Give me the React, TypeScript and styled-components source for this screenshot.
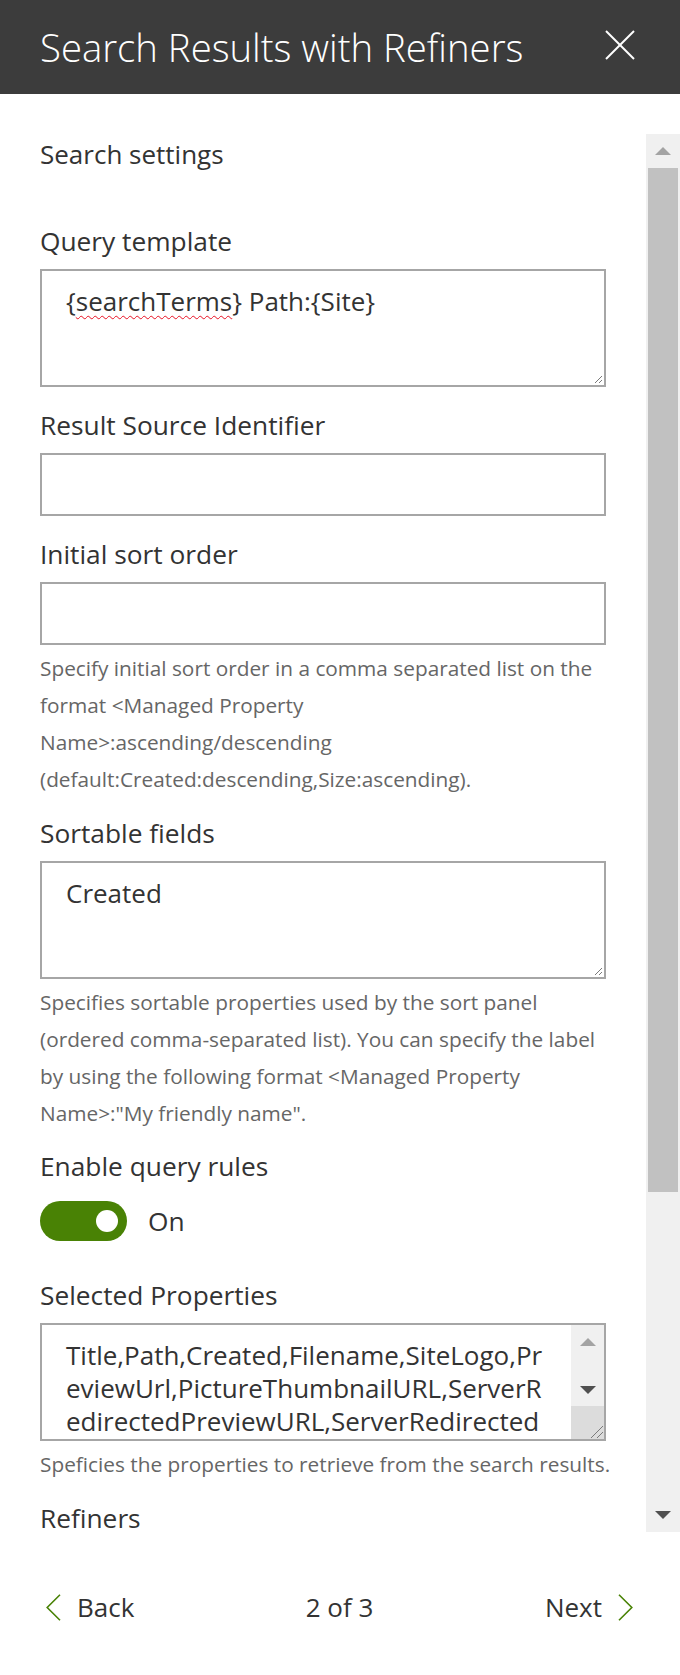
import React from 'react';
import styled, { createGlobalStyle } from 'styled-components';

const GlobalStyle = createGlobalStyle`
  html, body {
    margin: 0;
    padding: 0;
    background: #ffffff;
  }
  body {
    font-family: "Open Sans", "Noto Sans", sans-serif;
    width: 680px;
    height: 1675px;
    overflow: hidden;
  }
  * { box-sizing: border-box; }
`;

const Panel = styled.div`
  width: 680px;
  height: 1675px;
  display: flex;
  flex-direction: column;
  background: #ffffff;
`;

const Header = styled.header`
  flex-shrink: 0;
  height: 94px;
  background: #3c3c3c;
  display: flex;
  align-items: center;
  justify-content: space-between;
  padding: 0 45px 0 40px;
`;

const Title = styled.h1`
  margin: 0;
  color: #ffffff;
  font-weight: 300;
  font-size: 38.3px;
  line-height: 48px;
  letter-spacing: 0;
`;

const CloseButton = styled.button`
  width: 30px;
  height: 30px;
  padding: 0;
  border: none;
  background: none;
  display: flex;
  margin-top: -4px;
`;

const Main = styled.div`
  display: flex;
  height: 1398px;
  margin-top: 40px;
  flex-shrink: 0;
`;

const Content = styled.div`
  flex: 1;
  min-width: 0;
  padding: 2px 40px 0 40px;
  color: #333333;
`;

const ScrollBar = styled.div`
  width: 34px;
  background: #f0f0f0;
  display: flex;
  flex-direction: column;
`;

const ScrollButton = styled.div<{ $size: number }>`
  height: ${(p) => p.$size}px;
  flex-shrink: 0;
  display: flex;
  align-items: center;
  justify-content: center;
`;

const Thumb = styled.div`
  height: 1024px;
  margin: 0 2px;
  background: #c1c1c1;
`;

const Track = styled.div`
  flex: 1;
`;

const SectionTitle = styled.div`
  font-size: 26px;
  line-height: 36px;
  margin-bottom: 51px;
`;

const Field = styled.div<{ $gap: number }>`
  margin-bottom: ${(p) => p.$gap}px;
`;

const Label = styled.div<{ $last?: boolean }>`
  font-size: 26.3px;
  line-height: 36px;
  margin-bottom: ${(p) => (p.$last ? 0 : 10)}px;
`;

const Box = styled.div<{ $height: number }>`
  position: relative;
  height: ${(p) => p.$height}px;
  border: 2px solid #a6a6a6;
  background: #ffffff;
  padding: 14px 24px 0 24px;
  font-size: 26px;
  line-height: 33px;
  color: #333333;
  overflow: hidden;
  white-space: nowrap;
`;

const Misspelled = styled.span`
  text-decoration: underline wavy #e81123;
  text-decoration-thickness: 1px;
  text-underline-offset: 4px;
  text-decoration-skip-ink: none;
`;

const Grip = styled.svg`
  position: absolute;
  right: 1px;
  bottom: 1px;
`;

const Description = styled.div`
  margin-top: 5px;
  font-size: 20.8px;
  line-height: 37px;
  color: #666666;
`;

const Line = styled.div`
  white-space: nowrap;
`;

const ToggleRow = styled.div`
  display: flex;
  align-items: center;
  gap: 21px;
  margin-top: 17px;
`;

const ToggleTrack = styled.div`
  width: 87px;
  height: 40px;
  border-radius: 20px;
  background: #498205;
  display: flex;
  align-items: center;
  justify-content: flex-end;
  padding-right: 9px;
`;

const Knob = styled.div`
  width: 22px;
  height: 22px;
  border-radius: 50%;
  background: #ffffff;
`;

const ToggleText = styled.span`
  font-size: 26.3px;
  line-height: 36px;
  color: #333333;
`;

const PropsBox = styled.div`
  display: flex;
  height: 118px;
  border: 2px solid #a6a6a6;
  background: #ffffff;
`;

const PropsText = styled.div`
  flex: 1;
  min-width: 0;
  overflow: hidden;
  padding: 14px 0 0 24px;
  font-size: 26px;
  line-height: 33px;
  color: #333333;
`;

const InnerScroll = styled.div`
  width: 33px;
  background: #f0f0f0;
  display: flex;
  flex-direction: column;
`;

const InnerCorner = styled.div`
  height: 33px;
  flex-shrink: 0;
  background: #dcdcdc;
  display: flex;
  align-items: flex-end;
  justify-content: flex-end;
`;

const Footer = styled.footer`
  flex: 1;
  display: grid;
  grid-template-columns: 1fr auto 1fr;
  align-items: center;
  padding: 7px 47px 0 46px;
  color: #333333;
  font-size: 26px;
`;

const NavButton = styled.button<{ $align: 'start' | 'end' }>`
  justify-self: ${(p) => p.$align};
  display: flex;
  align-items: center;
  gap: 16px;
  padding: 0;
  border: none;
  background: none;
  font-family: inherit;
  font-size: 26px;
  line-height: 36px;
  color: #333333;
`;

const PageIndicator = styled.span`
  line-height: 36px;
`;

const Arrow = ({ dir, color }: { dir: 'up' | 'down'; color: string }) => (
  <svg width="16" height="8" viewBox="0 0 16 8">
    {dir === 'up' ? (
      <polygon points="0,8 8,0 16,8" fill={color} />
    ) : (
      <polygon points="0,0 16,0 8,8" fill={color} />
    )}
  </svg>
);

const ResizeGrip = () => (
  <Grip width="10" height="10" viewBox="0 0 10 10">
    <line x1="9" y1="2" x2="2" y2="9" stroke="#7a7a7a" strokeWidth="1" />
    <line x1="9" y1="6" x2="6" y2="9" stroke="#7a7a7a" strokeWidth="1" />
  </Grip>
);

const Chevron = ({ dir }: { dir: 'left' | 'right' }) => (
  <svg width="15" height="27" viewBox="0 0 15 27">
    <polyline
      points={dir === 'left' ? '14,0.8 1.2,13.5 14,26.2' : '1,0.8 13.8,13.5 1,26.2'}
      fill="none"
      stroke="#498205"
      strokeWidth="1.6"
    />
  </svg>
);

const sortDesc = [
  'Specify initial sort order in a comma separated list on the',
  'format <Managed Property',
  'Name>:ascending/descending',
  '(default:Created:descending,Size:ascending).',
];

const sortableDesc = [
  'Specifies sortable properties used by the sort panel',
  '(ordered comma-separated list). You can specify the label',
  'by using the following format <Managed Property',
  'Name>:"My friendly name".',
];

const propLines = [
  'Title,Path,Created,Filename,SiteLogo,Pr',
  'eviewUrl,PictureThumbnailURL,ServerR',
  'edirectedPreviewURL,ServerRedirected',
];

export default function App() {
  return (
    <>
      <GlobalStyle />
      <Panel>
        <Header>
          <Title>Search Results with Refiners</Title>
          <CloseButton aria-label="Close">
            <svg width="30" height="30" viewBox="0 0 30 30">
              <line x1="1" y1="1" x2="29" y2="29" stroke="#ffffff" strokeWidth="2" />
              <line x1="29" y1="1" x2="1" y2="29" stroke="#ffffff" strokeWidth="2" />
            </svg>
          </CloseButton>
        </Header>

        <Main>
          <Content>
            <SectionTitle>Search settings</SectionTitle>

            <Field $gap={20}>
              <Label>Query template</Label>
              <Box $height={118}>
                {'{'}
                <Misspelled>searchTerms</Misspelled>
                {'} Path:{Site}'}
                <ResizeGrip />
              </Box>
            </Field>

            <Field $gap={20}>
              <Label>Result Source Identifier</Label>
              <Box $height={63} />
            </Field>

            <Field $gap={17}>
              <Label>Initial sort order</Label>
              <Box $height={63} />
              <Description>
                {sortDesc.map((l) => (
                  <Line key={l}>{l}</Line>
                ))}
              </Description>
            </Field>

            <Field $gap={16}>
              <Label>Sortable fields</Label>
              <Box $height={118}>
                Created
                <ResizeGrip />
              </Box>
              <Description>
                {sortableDesc.map((l) => (
                  <Line key={l}>{l}</Line>
                ))}
              </Description>
            </Field>

            <Field $gap={36}>
              <Label>Enable query rules</Label>
              <ToggleRow>
                <ToggleTrack>
                  <Knob />
                </ToggleTrack>
                <ToggleText>On</ToggleText>
              </ToggleRow>
            </Field>

            <Field $gap={17}>
              <Label>Selected Properties</Label>
              <PropsBox>
                <PropsText>
                  {propLines.map((l) => (
                    <Line key={l}>{l}</Line>
                  ))}
                </PropsText>
                <InnerScroll>
                  <ScrollButton $size={33}>
                    <Arrow dir="up" color="#a3a3a3" />
                  </ScrollButton>
                  <Track />
                  <ScrollButton $size={33}>
                    <Arrow dir="down" color="#505050" />
                  </ScrollButton>
                  <InnerCorner>
                    <svg width="16" height="16" viewBox="0 0 16 16">
                      <line x1="15" y1="3" x2="3" y2="15" stroke="#7a7a7a" strokeWidth="1" />
                      <line x1="15" y1="9" x2="9" y2="15" stroke="#7a7a7a" strokeWidth="1" />
                    </svg>
                  </InnerCorner>
                </InnerScroll>
              </PropsBox>
              <Description>
                <Line>Speficies the properties to retrieve from the search results.</Line>
              </Description>
            </Field>

            <Field $gap={0}>
              <Label $last>Refiners</Label>
            </Field>
          </Content>

          <ScrollBar>
            <ScrollButton $size={34}>
              <Arrow dir="up" color="#a3a3a3" />
            </ScrollButton>
            <Thumb />
            <Track />
            <ScrollButton $size={34}>
              <Arrow dir="down" color="#505050" />
            </ScrollButton>
          </ScrollBar>
        </Main>

        <Footer>
          <NavButton $align="start">
            <Chevron dir="left" />
            Back
          </NavButton>
          <PageIndicator>2 of 3</PageIndicator>
          <NavButton $align="end">
            Next
            <Chevron dir="right" />
          </NavButton>
        </Footer>
      </Panel>
    </>
  );
}
